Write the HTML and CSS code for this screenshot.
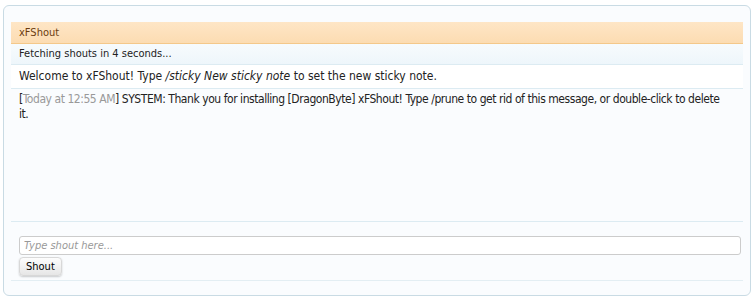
FILE: index.html
```html
<!DOCTYPE html>
<html lang="en">

<head>
    <meta charset="UTF-8">
    <meta name="viewport" content="width=device-width, initial-scale=1.0">
    <title>xFShout</title>
    <link rel="stylesheet" href="styles.css">
</head>

<body>
    <div class="shoutbox">
        <div class="shout-header">xFShout</div>
        <div class="shout-status">Fetching shouts in 4 seconds...</div>
        <div class="shout-sticky">Welcome to xFShout! Type <em>/sticky New sticky note</em> to set the new sticky note.</div>
        <div class="shout-list">
            <p class="shout-item">[<span class="shout-time">Today at 12:55 AM</span>] SYSTEM: Thank you for installing [DragonByte] xFShout! Type /prune to get rid of this message, or double-click to delete it.</p>
        </div>
        <div class="shout-form">
            <input type="text" class="shout-input" placeholder="Type shout here...">
            <button class="shout-btn">Shout</button>
        </div>
    </div>
</body>

</html>
```

FILE: styles.css
```css
body {
    font-family: "DejaVu Sans Condensed", "DejaVu Sans", sans-serif;
    margin: 0;
    padding: 5px 3px;
    background-color: #fff;
    color: #000;
}

.shoutbox {
    height: 291px;
    box-sizing: border-box;
    border: 1px solid #c9dbe4;
    border-radius: 6px;
    background-color: #fafcfe;
    padding: 16px 7px 0 7px;
    display: flex;
    flex-direction: column;
}

.shout-header {
    height: 21px;
    line-height: 21px;
    padding-left: 8px;
    font-size: 11px;
    color: #6b3d0f;
    background: linear-gradient(#fee6c6, #fcdcb2);
    border-bottom: 1px solid #f4c88a;
}

.shout-status {
    height: 20px;
    line-height: 20px;
    padding-left: 8px;
    font-size: 11px;
    color: #222;
    background: linear-gradient(#f7fbfd, #eef6fb);
    border-bottom: 1px solid #dcebf2;
}

.shout-sticky {
    height: 23px;
    line-height: 23px;
    padding-left: 8px;
    font-size: 12px;
    color: #222;
    background-color: #fff;
    border-bottom: 1px solid #dcebf2;
}

.shout-list {
    height: 129px;
    padding: 3px 18px 0 8px;
    border-bottom: 1px solid #dcebf2;
}

.shout-item {
    margin: 0;
    font-size: 12px;
    line-height: 15px;
    letter-spacing: -0.45px;
    color: #222;
}

.shout-time {
    color: #999;
}

.shout-form {
    padding: 14px 2px 4px 8px;
    border-bottom: 1px solid #e3eef3;
    display: flex;
    flex-direction: column;
    align-items: flex-start;
    gap: 2px;
}

.shout-input {
    width: 100%;
    box-sizing: border-box;
    height: 19px;
    border: 1px solid #ccc;
    border-radius: 3px;
    padding: 0 4px;
    font-family: inherit;
    font-size: 11px;
    background-color: #fff;
}

.shout-input::placeholder {
    color: #999;
    font-style: italic;
}

.shout-btn {
    height: 19px;
    padding: 0 6px;
    font-family: inherit;
    font-size: 11px;
    color: #000;
    border: 1px solid #d8d8d8;
    border-radius: 4px;
    background: linear-gradient(#fdfdfd, #e6e6e6);
    box-shadow: 0 1px 2px rgba(0, 0, 0, 0.2);
}
```
